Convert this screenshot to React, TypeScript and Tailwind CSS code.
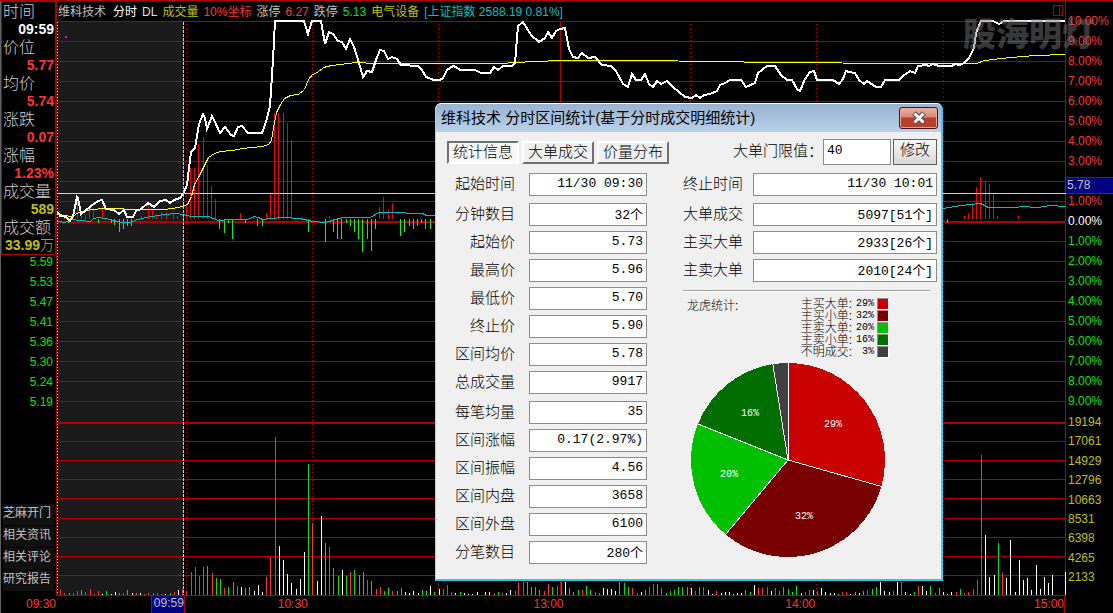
import React from "react";

type Bar = [number, number, string];

const GRID_THIN = [
  21, 41, 61, 81, 101, 121, 141, 161, 181, 201, 241, 261, 281, 301, 321, 341, 361, 381, 401, 441,
  460, 479, 498, 518, 537, 556, 575, 595,
];
const GRID_THICK = [221, 422];
const DOTTED_X = [186, 312, 438, 690, 816, 943];

const PRICE =
  "57,211 60,216 64,216 67,218 70,221 73,216 75,207 77,197 78,198 81,214 85,211 91,206 98,201 102,200 106,209 114,210 119,214 124,210 127,217 133,217 136,211 141,209 148,203 154,207 160,201 166,200 170,203 174,200 180,198 183,194 187,185 191,152 195,148 199,124 203,114 205,118 207,129 212,116 215,122 220,133 225,127 231,135 234,136 238,127 242,126 248,133 262,133 266,122 270,106 273,60 275,21 304,21 308,34 312,21 321,21 325,44 329,32 333,34 338,41 342,42 346,49 350,39 354,47 359,63 363,77 367,71 372,72 376,60 380,50 384,51 388,59 392,57 397,59 401,65 418,66 422,70 426,77 434,80 440,80 443,78 447,70 453,66 456,67 460,70 475,70 481,73 490,73 494,67 498,70 503,66 512,66 515,63 518,26 523,22 531,35 539,42 545,38 548,32 552,38 556,31 560,29 565,28 569,49 573,57 578,58 582,53 588,58 595,57 602,65 611,66 616,71 623,84 628,87 632,74 636,80 641,80 645,74 649,84 653,87 657,81 661,84 667,81 673,87 685,97 692,98 696,95 700,98 704,95 710,94 717,91 720,85 725,83 730,80 741,80 746,87 755,83 758,73 767,66 775,66 781,75 787,80 792,80 797,89 800,91 805,79 810,72 814,71 817,80 833,80 839,84 843,79 846,71 849,72 855,73 859,80 864,84 867,81 876,87 881,87 885,80 899,80 903,76 910,71 915,73 918,66 926,65 929,66 933,64 939,66 952,66 955,64 960,65 964,63 969,58 974,48 976,33 981,21 993,21 999,24 1004,21 1065,21";
const AVERAGE =
  "57,213 63,215 72,216 78,212 85,210 92,209 104,208 118,208 128,209 164,209 178,207 187,204 191,196 194,184 199,175 204,165 208,157 214,153 220,151 232,150 242,148 262,146 268,144 271,140 273,127 276,112 280,104 284,98 290,95 298,94 304,89 308,79 312,74 317,72 323,67 331,65 340,64 355,62 375,63 500,63 515,62 535,61 560,60 655,60 700,61 786,62 896,63 976,63 984,60 1010,57 1035,55 1065,54";
const INDEX =
  "57,221 65,222 70,219 80,220 90,221 93,218 98,217 110,219 120,222 130,222 137,219 146,217 158,215 164,214 175,213 183,214 190,216 208,216 218,220 232,219 248,219 253,216 258,217 262,219 282,217 300,218 312,221 325,222 335,219 342,217 370,217 378,212 388,212 422,213 426,215 434,215 943,208 954,206 970,204 980,203 988,207 1017,207 1020,206 1038,207 1050,205 1065,206";

// x, top edge; the bars stand on the zero line
const BUY: [number, number][] = [
  [64, 216], [73, 216], [77, 198], [81, 216], [85, 216], [89, 206], [93, 210], [102, 206],
  [141, 216], [148, 205], [152, 210], [156, 216], [161, 212], [166, 212], [173, 213], [177, 216],
  [183, 217], [186, 204], [190, 168], [194, 168], [198, 144], [203, 137], [207, 165], [211, 186],
  [215, 199], [240, 213], [253, 216], [266, 213], [270, 193], [274, 113], [278, 113], [283, 113],
  [287, 123], [291, 140], [329, 216], [379, 207], [383, 197], [388, 210], [392, 203], [964, 216],
  [968, 213], [972, 203], [976, 187], [980, 177], [985, 181], [989, 184], [993, 193], [997, 216],
  [1018, 216],
];
// x, bottom edge; the bars hang from the zero line
const SELL: [number, number][] = [
  [68, 223], [98, 223], [111, 223], [114, 225], [119, 232], [123, 229], [127, 226], [131, 226],
  [219, 229], [224, 233], [228, 223], [232, 239], [245, 223], [257, 226], [262, 226], [308, 232],
  [325, 242], [333, 232], [337, 239], [341, 239], [346, 223], [350, 226], [354, 232], [358, 239],
  [362, 252], [367, 239], [371, 251], [375, 229], [400, 236], [404, 232], [409, 226], [413, 229],
  [417, 226], [421, 223], [425, 229], [430, 229], [947, 223],
];

const VOLUME: Bar[] = [
  [60, 590, "r"], [64, 593, "r"], [69, 593, "g"], [73, 593, "r"], [77, 591, "r"], [81, 590, "g"],
  [85, 592, "r"], [90, 589, "r"], [94, 594, "r"], [98, 591, "r"], [102, 594, "w"], [106, 591, "g"],
  [111, 594, "w"], [115, 592, "w"], [119, 593, "g"], [123, 593, "r"], [127, 590, "g"],
  [132, 593, "w"], [136, 593, "r"], [140, 593, "w"], [144, 594, "r"], [148, 593, "r"],
  [153, 593, "g"], [157, 593, "r"], [161, 594, "r"], [165, 594, "w"], [170, 593, "g"],
  [174, 592, "r"], [178, 590, "w"], [182, 589, "r"], [186, 591, "r"], [191, 572, "r"],
  [195, 567, "r"], [199, 576, "r"], [203, 567, "r"], [207, 566, "g"], [212, 573, "r"],
  [216, 578, "g"], [220, 579, "g"], [224, 588, "r"], [228, 587, "g"], [233, 582, "g"],
  [237, 586, "r"], [241, 587, "w"], [245, 588, "g"], [249, 587, "g"], [254, 591, "w"],
  [258, 585, "w"], [262, 592, "w"], [266, 577, "r"], [270, 558, "r"], [275, 437, "r"],
  [279, 546, "w"], [283, 560, "w"], [287, 574, "w"], [291, 583, "w"], [296, 589, "w"],
  [300, 579, "w"], [304, 552, "w"], [308, 464, "g"], [312, 523, "r"], [317, 581, "w"],
  [321, 516, "w"], [325, 543, "g"], [329, 547, "r"], [333, 568, "g"], [338, 576, "g"],
  [342, 570, "w"], [346, 576, "g"], [350, 572, "r"], [354, 570, "g"], [359, 575, "g"],
  [363, 572, "g"], [367, 580, "r"], [371, 581, "g"], [376, 589, "r"], [380, 587, "r"],
  [384, 591, "g"], [388, 588, "g"], [392, 591, "r"], [397, 591, "g"], [401, 588, "g"],
  [405, 592, "w"], [409, 593, "w"], [413, 591, "w"], [418, 593, "w"], [422, 590, "g"],
  [426, 591, "g"], [430, 586, "w"], [434, 592, "g"], [439, 589, "w"], [443, 589, "r"],
  [447, 585, "r"], [451, 592, "r"], [455, 593, "w"], [460, 592, "g"], [464, 593, "w"],
  [468, 594, "w"], [472, 594, "w"], [477, 592, "w"], [485, 592, "w"], [489, 592, "w"],
  [494, 593, "r"], [498, 592, "g"], [502, 593, "r"], [506, 593, "w"], [510, 590, "w"],
  [515, 591, "r"], [518, 582, "r"], [523, 582, "r"], [527, 582, "g"], [531, 587, "g"],
  [535, 587, "g"], [539, 590, "g"], [544, 591, "r"], [548, 584, "r"], [552, 587, "g"],
  [557, 586, "r"], [561, 582, "r"], [565, 582, "w"], [569, 588, "g"], [573, 592, "g"],
  [578, 590, "g"], [582, 590, "r"], [586, 586, "g"], [590, 590, "g"], [595, 592, "r"],
  [599, 593, "g"], [603, 588, "w"], [607, 589, "w"], [611, 589, "w"], [615, 591, "w"],
  [619, 582, "g"], [624, 583, "g"], [628, 587, "g"], [632, 588, "r"], [637, 593, "r"],
  [641, 592, "w"], [645, 590, "g"], [649, 587, "r"], [653, 584, "r"], [657, 584, "g"],
  [661, 588, "r"], [666, 593, "g"], [670, 591, "g"], [674, 590, "g"], [678, 587, "g"],
  [682, 587, "g"], [687, 587, "g"], [691, 588, "w"], [695, 591, "r"], [699, 587, "g"],
  [703, 587, "r"], [708, 590, "w"], [712, 594, "w"], [716, 591, "r"], [721, 593, "w"],
  [725, 592, "w"], [729, 592, "w"], [733, 594, "w"], [737, 593, "w"], [741, 593, "w"],
  [745, 590, "g"], [750, 592, "g"], [754, 585, "w"], [758, 588, "r"], [762, 588, "r"],
  [767, 587, "r"], [771, 591, "w"], [775, 588, "r"], [779, 591, "g"], [783, 587, "g"],
  [788, 589, "g"], [792, 592, "g"], [796, 586, "g"], [801, 593, "w"], [805, 592, "r"],
  [809, 590, "r"], [813, 590, "w"], [817, 591, "r"], [821, 588, "w"], [825, 592, "w"],
  [830, 593, "w"], [834, 593, "w"], [838, 594, "g"], [842, 592, "r"], [846, 592, "r"],
  [850, 594, "w"], [855, 592, "g"], [859, 593, "w"], [863, 591, "g"], [867, 590, "r"],
  [872, 589, "g"], [876, 587, "g"], [880, 582, "w"], [884, 591, "w"], [889, 592, "w"],
  [893, 591, "r"], [897, 582, "w"], [901, 582, "r"], [905, 592, "w"], [910, 594, "w"],
  [914, 592, "g"], [918, 586, "r"], [922, 586, "w"], [926, 591, "w"], [930, 586, "g"],
  [935, 593, "r"], [939, 588, "g"], [943, 592, "w"], [947, 594, "w"], [951, 592, "w"],
  [956, 592, "r"], [960, 589, "g"], [964, 593, "r"], [968, 592, "r"], [973, 589, "r"],
  [977, 580, "r"], [981, 455, "r"], [985, 535, "w"], [989, 577, "w"], [994, 575, "w"],
  [998, 543, "g"], [1002, 573, "r"], [1006, 578, "w"], [1010, 540, "w"], [1015, 592, "w"],
  [1019, 560, "w"], [1023, 580, "w"], [1027, 578, "w"], [1031, 590, "w"], [1036, 565, "w"],
  [1040, 589, "w"], [1044, 577, "w"], [1048, 583, "w"], [1052, 575, "w"],
];
const INK: Record<string, string> = { r: "#ff3232", g: "#00e600", w: "#ffffff" };

const QUOTE = [
  { label: "时间", value: "09:59", tone: "text-white" },
  { label: "价位", value: "5.77", tone: "text-[#ff3232]" },
  { label: "均价", value: "5.74", tone: "text-[#ff3232]" },
  { label: "涨跌", value: "0.07", tone: "text-[#ff3232]" },
  { label: "涨幅", value: "1.23%", tone: "text-[#ff3232]" },
  { label: "成交量", value: "589", tone: "text-[#c0c000]" },
  { label: "成交额", value: "33.99", unit: "万", tone: "text-[#c0c000]" },
];
const LEFT_SCALE = ["5.59", "5.53", "5.47", "5.41", "5.36", "5.30", "5.24", "5.19"];
const LINKS = ["芝麻开门", "相关资讯", "相关评论", "研究报告"];
const UP = ["10.00%", "9.00%", "8.00%", "7.00%", "6.00%", "5.00%", "4.00%", "3.00%"];
const DOWN = ["1.00%", "2.00%", "3.00%", "4.00%", "5.00%", "6.00%", "7.00%", "8.00%", "9.00%"];
const VOLUME_SCALE = ["19194", "17061", "14929", "12796", "10663", "8531", "6398", "4265", "2133"];

const HEADER = [
  { text: "分时", tone: "text-white" },
  { text: "DL", tone: "text-[#e0e0e0]" },
  { text: "成交量", tone: "text-[#c0c000]" },
  { text: "10%坐标", tone: "text-[#ff3232]" },
  { text: "涨停", tone: "text-[#c0c0c0]" },
  { text: "6.27", tone: "text-[#ff3232]" },
  { text: "跌停", tone: "text-[#c0c0c0]" },
  { text: "5.13", tone: "text-[#00e600]" },
  { text: "电气设备", tone: "text-[#c0c000]" },
  { text: "[上证指数 2588.19 0.81%]", tone: "text-[#00c0c0]" },
];

const LEFT_GROUPS: [string, string][][] = [
  [["起始时间", "11/30 09:30"]],
  [
    ["分钟数目", "32个"],
    ["起始价", "5.73"],
    ["最高价", "5.96"],
    ["最低价", "5.70"],
    ["终止价", "5.90"],
    ["区间均价", "5.78"],
    ["总成交量", "9917"],
  ],
  [
    ["每笔均量", "35"],
    ["区间涨幅", "0.17(2.97%)"],
    ["区间振幅", "4.56"],
    ["区间内盘", "3658"],
    ["区间外盘", "6100"],
    ["分笔数目", "280个"],
  ],
];
const RIGHT_GROUPS: [string, string][][] = [
  [["终止时间", "11/30 10:01"]],
  [
    ["大单成交", "5097[51个]"],
    ["主买大单", "2933[26个]"],
    ["主卖大单", "2010[24个]"],
  ],
];
const LEGEND = [
  { name: "主买大单", pct: "29%", swatch: "bg-[#c80000]" },
  { name: "主买小单", pct: "32%", swatch: "bg-[#780000]" },
  { name: "主卖大单", pct: "20%", swatch: "bg-[#00c000]" },
  { name: "主卖小单", pct: "16%", swatch: "bg-[#006e00]" },
  { name: "不明成交", pct: "3%", swatch: "bg-[#404040]" },
];

function Chart() {
  return (
    <svg
      viewBox="57 20 1009 576"
      preserveAspectRatio="none"
      shapeRendering="crispEdges"
      className="block h-[576px] w-full"
      role="img"
      aria-label="分时走势"
    >
      <rect x="57" y="22" width="126" height="573" fill="#1a1a1a" />
      {GRID_THIN.map((y) => (
        <rect key={y} x="57" y={y} width="1009" height="1" fill="#b00000" />
      ))}
      {GRID_THICK.map((y) => (
        <rect key={y} x="57" y={y} width="1009" height="2" fill="#b00000" />
      ))}
      {DOTTED_X.map((x) => (
        <line key={x} x1={x + 0.5} x2={x + 0.5} y1="24" y2="595" stroke="#b00000" strokeDasharray="1 3" />
      ))}
      <rect x="560" y="21" width="1" height="574" fill="#b00000" />
      <rect x="1065" y="20" width="1" height="576" fill="#b00000" />
      <line x1="57.5" x2="57.5" y1="22" y2="595" stroke="#ffff60" strokeDasharray="1 2" />
      <rect x="65" y="36" width="2" height="2" fill="#ff00ff" />
      {BUY.map(([x, y]) => (
        <rect key={x} x={x} y={y} width="1" height={219 - y} fill="#ff0000" />
      ))}
      {SELL.map(([x, y]) => (
        <rect key={x} x={x} y="219" width="1" height={y - 219} fill="#00ff00" />
      ))}
      {VOLUME.map(([x, y, c]) => (
        <rect key={x} x={x} y={y} width="1" height={595 - y} fill={INK[c]} />
      ))}
      <rect x="1065" y="572" width="1" height="23" fill="#ffffff" />
      <g fill="none" transform="translate(0.5 0.5)">
        <polyline points={INDEX} stroke="#00c0c0" />
        <polyline points={AVERAGE} stroke="#ffff00" />
      </g>
      <polyline points={PRICE} fill="none" stroke="#ffffff" strokeWidth="2" />
      <rect x="57" y="193" width="1009" height="1" fill="#d0d0d0" />
      <line x1="183.5" x2="183.5" y1="22" y2="595" stroke="#d0d0e0" strokeDasharray="3 1" />
    </svg>
  );
}

function Sidebar() {
  return (
    <aside className="flex w-[57px] shrink-0 flex-col border-x border-l-[#606060] border-r-[#b00000]">
      <dl className="border border-[#b00000] px-px">
        {QUOTE.map((q) => (
          <div key={q.label}>
            <dt className="h-[18px] text-base leading-5 font-light whitespace-nowrap text-[#d0d0d0]">{q.label}</dt>
            <dd className={`flex h-[18px] justify-end text-sm leading-[18px] font-bold ${q.tone}`}>
              {q.value}
              {q.unit && <span className="font-light">{q.unit}</span>}
            </dd>
          </div>
        ))}
      </dl>
      <ul className="flex flex-col gap-2 pr-[3px] text-right text-xs leading-[14px] text-[#00e600]">
        {LEFT_SCALE.map((v) => (
          <li key={v} className="h-3">{v}</li>
        ))}
      </ul>
      <nav className="mt-auto mb-[5px] flex flex-col gap-px px-0.5">
        {LINKS.map((t) => (
          <a key={t} href="#" className="h-[21px] bg-[#101010] text-xs leading-[18px] whitespace-nowrap text-[#c0c0c0]">
            {t}
          </a>
        ))}
      </nav>
    </aside>
  );
}

function RightScale() {
  return (
    <div className="flex w-[47px] shrink-0 flex-col pt-2.5 text-xs leading-[21px]">
      <ul className="pl-0.5">
        {UP.map((t) => (
          <li key={t} className="h-5 text-[#ff3232]">{t}</li>
        ))}
      </ul>
      <div className="relative h-5">
        <span className="absolute inset-x-0 top-[6px] h-[17px] border-y border-[#b00000] bg-[#000080] pl-px leading-[15px] text-[#c0c0c0]">
          5.78
        </span>
      </div>
      <ul className="pl-0.5">
        <li className="h-5 text-[#ff3232]">1.00%</li>
        <li className="h-5 text-white">0.00%</li>
        {DOWN.map((t) => (
          <li key={t} className="h-5 text-[#00e600]">{t}</li>
        ))}
      </ul>
      <ul className="flex h-[174px] flex-col justify-between pl-0.5 leading-[23px] text-[#c0c000]">
        {VOLUME_SCALE.map((t) => (
          <li key={t} className="h-[19px]">{t}</li>
        ))}
      </ul>
    </div>
  );
}

function Field({ id, label, value, wide }: { id: string; label: string; value: string; wide?: boolean }) {
  return (
    <div className={wide ? "flex items-center gap-2.5" : "flex items-center gap-3.5"}>
      <label
        htmlFor={id}
        className={
          wide
            ? "w-[60px] pb-0.5 text-[15px] leading-5 font-light whitespace-nowrap"
            : "w-[68px] pb-0.5 text-right text-[15px] leading-5 font-light whitespace-nowrap"
        }
      >
        {label}
      </label>
      <input
        id={id}
        readOnly
        value={value}
        className={`${wide ? "flex-1" : "w-[118px]"} h-[23px] min-w-0 border border-[#8c8c8c] bg-white pr-[3px] pb-0.5 text-right font-['Liberation_Mono','Noto_Sans_CJK_SC',monospace] text-[13px] outline-none`}
      />
    </div>
  );
}

function Groups({ groups, wide, prefix }: { groups: [string, string][][]; wide?: boolean; prefix: string }) {
  return (
    <div className="flex flex-col gap-[7px]">
      {groups.map((g, i) => (
        <div key={i} className="flex flex-col gap-[5px]">
          {g.map(([label, value]) => (
            <Field key={label} id={`${prefix}-${label}`} label={label} value={value} wide={wide} />
          ))}
        </div>
      ))}
    </div>
  );
}

function Pie() {
  const slices: [string, number, number][] = [
    ["#c80000", 0, 105.8],
    ["#780000", 105.8, 220],
    ["#00c000", 220, 291.8],
    ["#006e00", 291.8, 351],
    ["#404040", 351, 360],
  ];
  const at = (deg: number) => {
    const a = (deg * Math.PI) / 180;
    return `${98 + 97 * Math.sin(a)} ${98 - 97 * Math.cos(a)}`;
  };
  const labels: [string, number, number][] = [
    ["29%", 143, 65],
    ["32%", 114, 157],
    ["20%", 39, 115],
    ["16%", 60, 54],
  ];
  return (
    <svg width="196" height="196" viewBox="0 0 196 196" role="img" aria-label="龙虎统计">
      <g shapeRendering="crispEdges">
        {slices.map(([c, a, b]) => (
          <path key={c} fill={c} d={`M98 98 L${at(a)} A97 97 0 0 1 ${at(b)} Z`} />
        ))}
        {slices.map(([c, a]) => (
          <path key={c} stroke="#fff" d={`M98 98 L${at(a)}`} />
        ))}
      </g>
      <g fill="#fff" textAnchor="middle" className="font-['Liberation_Mono',monospace] text-[10px]">
        {labels.map(([t, x, y]) => (
          <text key={t} x={x} y={y}>{t}</text>
        ))}
      </g>
    </svg>
  );
}

function StatsDialog() {
  const raised = "border-t-white border-l-white border-r-[#707070] border-b-[#707070] bg-[#f0f0f0]";
  const sunken = "border-t-[#707070] border-l-[#707070] border-r-white border-b-white bg-[#f8f8f8]";
  return (
    <section
      role="dialog"
      aria-labelledby="dialog-title"
      className="absolute top-[102px] left-[435px] w-[508px] overflow-hidden rounded-t-md border border-t-white border-r-2 border-b-2 border-l-[#b9cfe8] border-r-[#3cc8f0] border-b-[#28c8e8] bg-[#f0f0f0] text-black"
    >
      <header className="flex h-7 items-center justify-between bg-linear-to-b from-[#98b2d0] to-[#bbd1ea] pr-[3px] pl-[5px]">
        <h2 id="dialog-title" className="text-[15px] leading-7 whitespace-nowrap">
          维科技术 分时区间统计(基于分时成交明细统计)
        </h2>
        <button
          aria-label="关闭"
          className="flex h-[22px] w-[39px] items-center justify-center rounded-[3px] border border-[#4a1420] bg-linear-to-b from-[#eab4a6] from-0% via-[#d98573] via-45% to-[#b8402a] to-50% shadow-[inset_0_0_0_1px_#e8a898]"
        >
          <svg width="16" height="14" viewBox="0 0 16 14" aria-hidden="true">
            <path d="M3 2 L13 12 M13 2 L3 12" stroke="#50505c" strokeWidth="5" />
            <path d="M3.5 2.5 L12.5 11.5 M12.5 2.5 L3.5 11.5" stroke="#f4f4f4" strokeWidth="3" />
          </svg>
        </button>
      </header>
      <div className="pt-1.5 pr-1 pb-[15px] pl-[11px]">
        <div className="flex h-7 items-center justify-between">
          <div className="flex gap-[3px]">
            {["统计信息", "大单成交", "价量分布"].map((t, i) => (
              <button
                key={t}
                className={`h-[23px] w-[72px] border-2 pb-0.5 text-[15px] leading-[17px] font-light whitespace-nowrap ${i === 0 ? sunken : raised}`}
              >
                {t}
              </button>
            ))}
          </div>
          <form className="flex items-center" onSubmit={(e) => e.preventDefault()}>
            <label htmlFor="limit" className="pb-0.5 text-[15px] leading-5 font-light whitespace-nowrap">大单门限值：</label>
            <input
              id="limit"
              defaultValue="40"
              className="h-[26px] w-[68px] border border-[#8c8c8c] bg-white pb-1 pl-[3px] font-['Liberation_Mono',monospace] text-[13px] outline-none"
            />
            <button className="ml-0.5 h-[26px] w-11 border border-[#606060] bg-linear-to-b from-[#f8f8f8] to-[#d8d8d8] pb-1 text-[15px] leading-5 font-light">
              修改
            </button>
          </form>
        </div>
        <div className="mt-[7px] flex gap-9">
          <Groups groups={LEFT_GROUPS} prefix="left" />
          <div className="flex flex-1 flex-col">
            <Groups groups={RIGHT_GROUPS} prefix="right" wide />
            <hr className="mt-2 mr-[7px] border-t border-b border-t-[#a0a0a0] border-b-white" />
            <div className="mt-1.5 flex items-start justify-between pr-12 pl-1 text-xs leading-[12px] font-light">
              <h3 className="mt-px leading-[14px]">龙虎统计:</h3>
              <ul>
                {LEGEND.map((l) => (
                  <li key={l.name} className="flex h-3 items-center">
                    <span>{l.name}:</span>
                    <span className="w-[22px] text-right font-['Liberation_Mono',monospace] text-[10px]">{l.pct}</span>
                    <span
                      className={`ml-[3px] h-3 w-3 border border-t-[#909090] border-r-white border-b-white border-l-[#909090] ${l.swatch}`}
                    />
                  </li>
                ))}
              </ul>
            </div>
            <div className="mt-1 pl-[7px]">
              <Pie />
            </div>
          </div>
        </div>
      </div>
    </section>
  );
}

export default function App() {
  return (
    <div className="relative flex min-h-screen flex-col overflow-hidden border-t border-[#b00000] bg-black font-['Liberation_Sans','Noto_Sans_CJK_SC',sans-serif]">
      <div className="flex">
        <Sidebar />
        <main className="min-w-0 flex-1">
          <header className="flex h-[19px] items-center justify-between border-r border-[#b00000] pr-0.5 pl-px text-xs leading-[19px] whitespace-nowrap">
            <div className="flex gap-[5px] pt-[3px]">
              <h1 className="mr-0.5 text-[#c0c0c0]">维科技术</h1>
              {HEADER.map((h) => (
                <span key={h.text} className={h.tone}>{h.text}</span>
              ))}
            </div>
            <svg width="10" height="11" viewBox="0 0 10 11" shapeRendering="crispEdges" aria-hidden="true">
              <path d="M0.5 0.5 H9.5 V10.5 H0.5 Z M6.5 0.5 V10.5" fill="none" stroke="#b00000" />
            </svg>
          </header>
          <Chart />
        </main>
        <RightScale />
      </div>
      <footer className="grid h-[17px] grid-cols-[57px_93fr_34fr_124fr_256fr_252fr_249fr_48px] border-l border-[#606060] text-right text-xs leading-4 text-[#ff3232]">
        <span className="pr-0.5">09:30</span>
        <span className="col-start-3 border-x border-[#b00000] bg-[#000080] leading-[14px] text-[#c0c0c0]">09:59</span>
        <span className="pr-px">10:30</span>
        <span className="pr-px">13:00</span>
        <span className="pr-px">14:00</span>
        <span className="border-r border-[#b00000]">15:00</span>
      </footer>
      <div className="pointer-events-none absolute top-[9px] right-[18px] text-[33px] leading-[50px] font-black whitespace-nowrap text-[#707070]/50">
        股海明灯
      </div>
      <StatsDialog />
    </div>
  );
}
